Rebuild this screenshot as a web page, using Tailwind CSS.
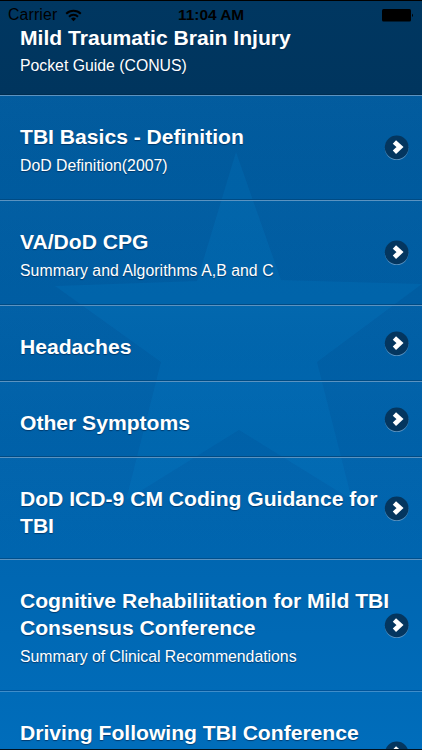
<!DOCTYPE html>
<html lang="en">
<head>
<meta charset="utf-8">
<title>Mild Traumatic Brain Injury</title>
<script src="https://cdn.jsdelivr.net/npm/@tailwindcss/browser@4"></script>
</head>
<body class="bg-[#005b9f]">
<svg class="hidden">
  <symbol id="arrow" viewBox="0 0 26 27">
    <circle cx="12.7" cy="14.3" r="11.8" fill="#5b94c2"/>
    <circle cx="12.7" cy="13.3" r="11.9" fill="#04365f"/>
    <path d="M10.4 7.9 16 13.1l-5.6 5.2" fill="none" stroke="#fff" stroke-width="4.8"/>
  </symbol>
</svg>
<div class="relative isolate flex h-[750px] w-[422px] flex-col overflow-hidden bg-linear-to-b from-[#005a9d] from-[12%] via-[#0063ac] via-[62%] to-[#006dbb] font-['Liberation_Sans',Arial,sans-serif] text-white [text-shadow:0_1px_1px_rgba(0,35,75,.65)]">
  <svg class="absolute inset-0 -z-10" width="422" height="750" viewBox="0 0 422 750">
    <path d="M236 152 281 280 422 284 317 362 352 500 239 430 126 500 161 362 55 286 197 281Z" fill="#0083cc" fill-opacity=".2"/>
  </svg>
  <header class="flex h-[95px] shrink-0 flex-col border-t border-black border-b border-b-[#002d50] bg-linear-to-b from-[#003761] to-[#00355e] px-5">
    <div class="-mx-5 flex h-[24px] shrink-0 items-center pt-[4px] text-[15.8px] text-black [text-shadow:none]">
      <div class="flex w-[178px] items-center gap-[8px] pl-[8px]">
        <span class="w-[49px] whitespace-nowrap tracking-[0.15px]">Carrier</span>
        <svg width="17" height="13" viewBox="0 0 17 13" fill="none" stroke="#000" stroke-width="2"><path d="M1.2 4.8a10.4 10.4 0 0 1 14.6 0M4 7.7a6.4 6.4 0 0 1 9 0"/><path d="M8.5 12.2 6 9.8a3.6 3.6 0 0 1 5 0Z" fill="#000" stroke="none"/></svg>
      </div>
      <span class="w-[66px] whitespace-nowrap text-[15.4px] font-bold">11:04 AM</span>
      <svg class="ml-auto mr-[8px]" width="32" height="13" viewBox="0 0 32 13"><rect width="29" height="12.5" rx="1.5"/><path d="M30 4.5q2 1.8 0 3.6Z"/></svg>
    </div>
    <h1 class="whitespace-nowrap text-[21.1px] leading-[26px] font-bold">Mild Traumatic Brain Injury</h1>
    <p class="mt-[5px] whitespace-nowrap text-[15.8px] leading-5">Pocket Guide (CONUS)</p>
  </header>
  <main>
    <section class="flex h-[105px] items-center justify-between border-t border-t-[#5b93c1] border-b border-b-[#004b84] bg-linear-to-b from-white/1 to-black/2 pr-[12px] pl-5">
      <div class="h-full w-[360px] pt-[28px]">
        <h2 class="whitespace-nowrap text-[21.1px] leading-[26.8px] font-bold">TBI Basics - Definition</h2>
        <p class="mt-[5px] whitespace-nowrap text-[15.8px] leading-5">DoD Definition(2007)</p>
      </div>
      <svg class="-ml-4 h-[27px] w-[26px] shrink-0"><use href="#arrow"/></svg>
    </section>
    <section class="flex h-[105px] items-center justify-between border-t border-t-[#5b93c1] border-b border-b-[#004b84] bg-linear-to-b from-white/1 to-black/2 pr-[12px] pl-5">
      <div class="h-full w-[360px] pt-[28px]">
        <h2 class="whitespace-nowrap text-[21.1px] leading-[26.8px] font-bold">VA/DoD CPG</h2>
        <p class="mt-[5px] whitespace-nowrap text-[15.8px] leading-5 tracking-[0.05px]">Summary and Algorithms A,B and C</p>
      </div>
      <svg class="-ml-4 h-[27px] w-[26px] shrink-0"><use href="#arrow"/></svg>
    </section>
    <section class="flex h-[76px] items-center justify-between border-t border-t-[#5b93c1] border-b border-b-[#004b84] bg-linear-to-b from-white/1 to-black/2 pr-[12px] pl-5">
      <div class="h-full w-[360px] pt-[28px]">
        <h2 class="whitespace-nowrap text-[21.1px] leading-[26.8px] font-bold">Headaches</h2>
      </div>
      <svg class="-ml-4 h-[27px] w-[26px] shrink-0"><use href="#arrow"/></svg>
    </section>
    <section class="flex h-[76px] items-center justify-between border-t border-t-[#5b93c1] border-b border-b-[#004b84] bg-linear-to-b from-white/1 to-black/2 pr-[12px] pl-5">
      <div class="h-full w-[360px] pt-[28px]">
        <h2 class="whitespace-nowrap text-[21.1px] leading-[26.8px] font-bold">Other Symptoms</h2>
      </div>
      <svg class="-ml-4 h-[27px] w-[26px] shrink-0"><use href="#arrow"/></svg>
    </section>
    <section class="flex h-[102px] items-center justify-between border-t border-t-[#5b93c1] border-b border-b-[#004f8c] bg-linear-to-b from-white/1 to-black/1 pr-[12px] pl-5">
      <div class="h-full w-[360px] pt-[28px]">
        <h2 class="whitespace-nowrap text-[21.1px] leading-[26.8px] font-bold">DoD ICD-9 CM Coding Guidance for<br>TBI</h2>
      </div>
      <svg class="-ml-4 h-[27px] w-[26px] shrink-0"><use href="#arrow"/></svg>
    </section>
    <section class="flex h-[132px] items-center justify-between border-t border-t-[#5b93c1] border-b border-b-[#00549a] pr-[12px] pl-5">
      <div class="h-full w-[360px] pt-[28px]">
        <h2 class="whitespace-nowrap text-[21.1px] leading-[26.8px] font-bold">Cognitive Rehabiliitation for Mild TBI<br>Consensus Conference</h2>
        <p class="mt-[5px] whitespace-nowrap text-[15.8px] leading-5">Summary of Clinical Recommendations</p>
      </div>
      <svg class="-ml-4 h-[27px] w-[26px] shrink-0"><use href="#arrow"/></svg>
    </section>
    <section class="flex h-[124px] items-center justify-between border-t border-t-[#3f8dca] pr-[12px] pl-5">
      <div class="h-full w-[360px] pt-[28px]">
        <h2 class="whitespace-nowrap text-[21.1px] leading-[26.8px] font-bold">Driving Following TBI Conference</h2>
      </div>
      <svg class="-ml-4 h-[27px] w-[26px] shrink-0"><use href="#arrow"/></svg>
    </section>
  </main>
  <div class="absolute inset-x-0 bottom-0 h-px bg-[#00101d]"></div>
</div>
</body>
</html>
